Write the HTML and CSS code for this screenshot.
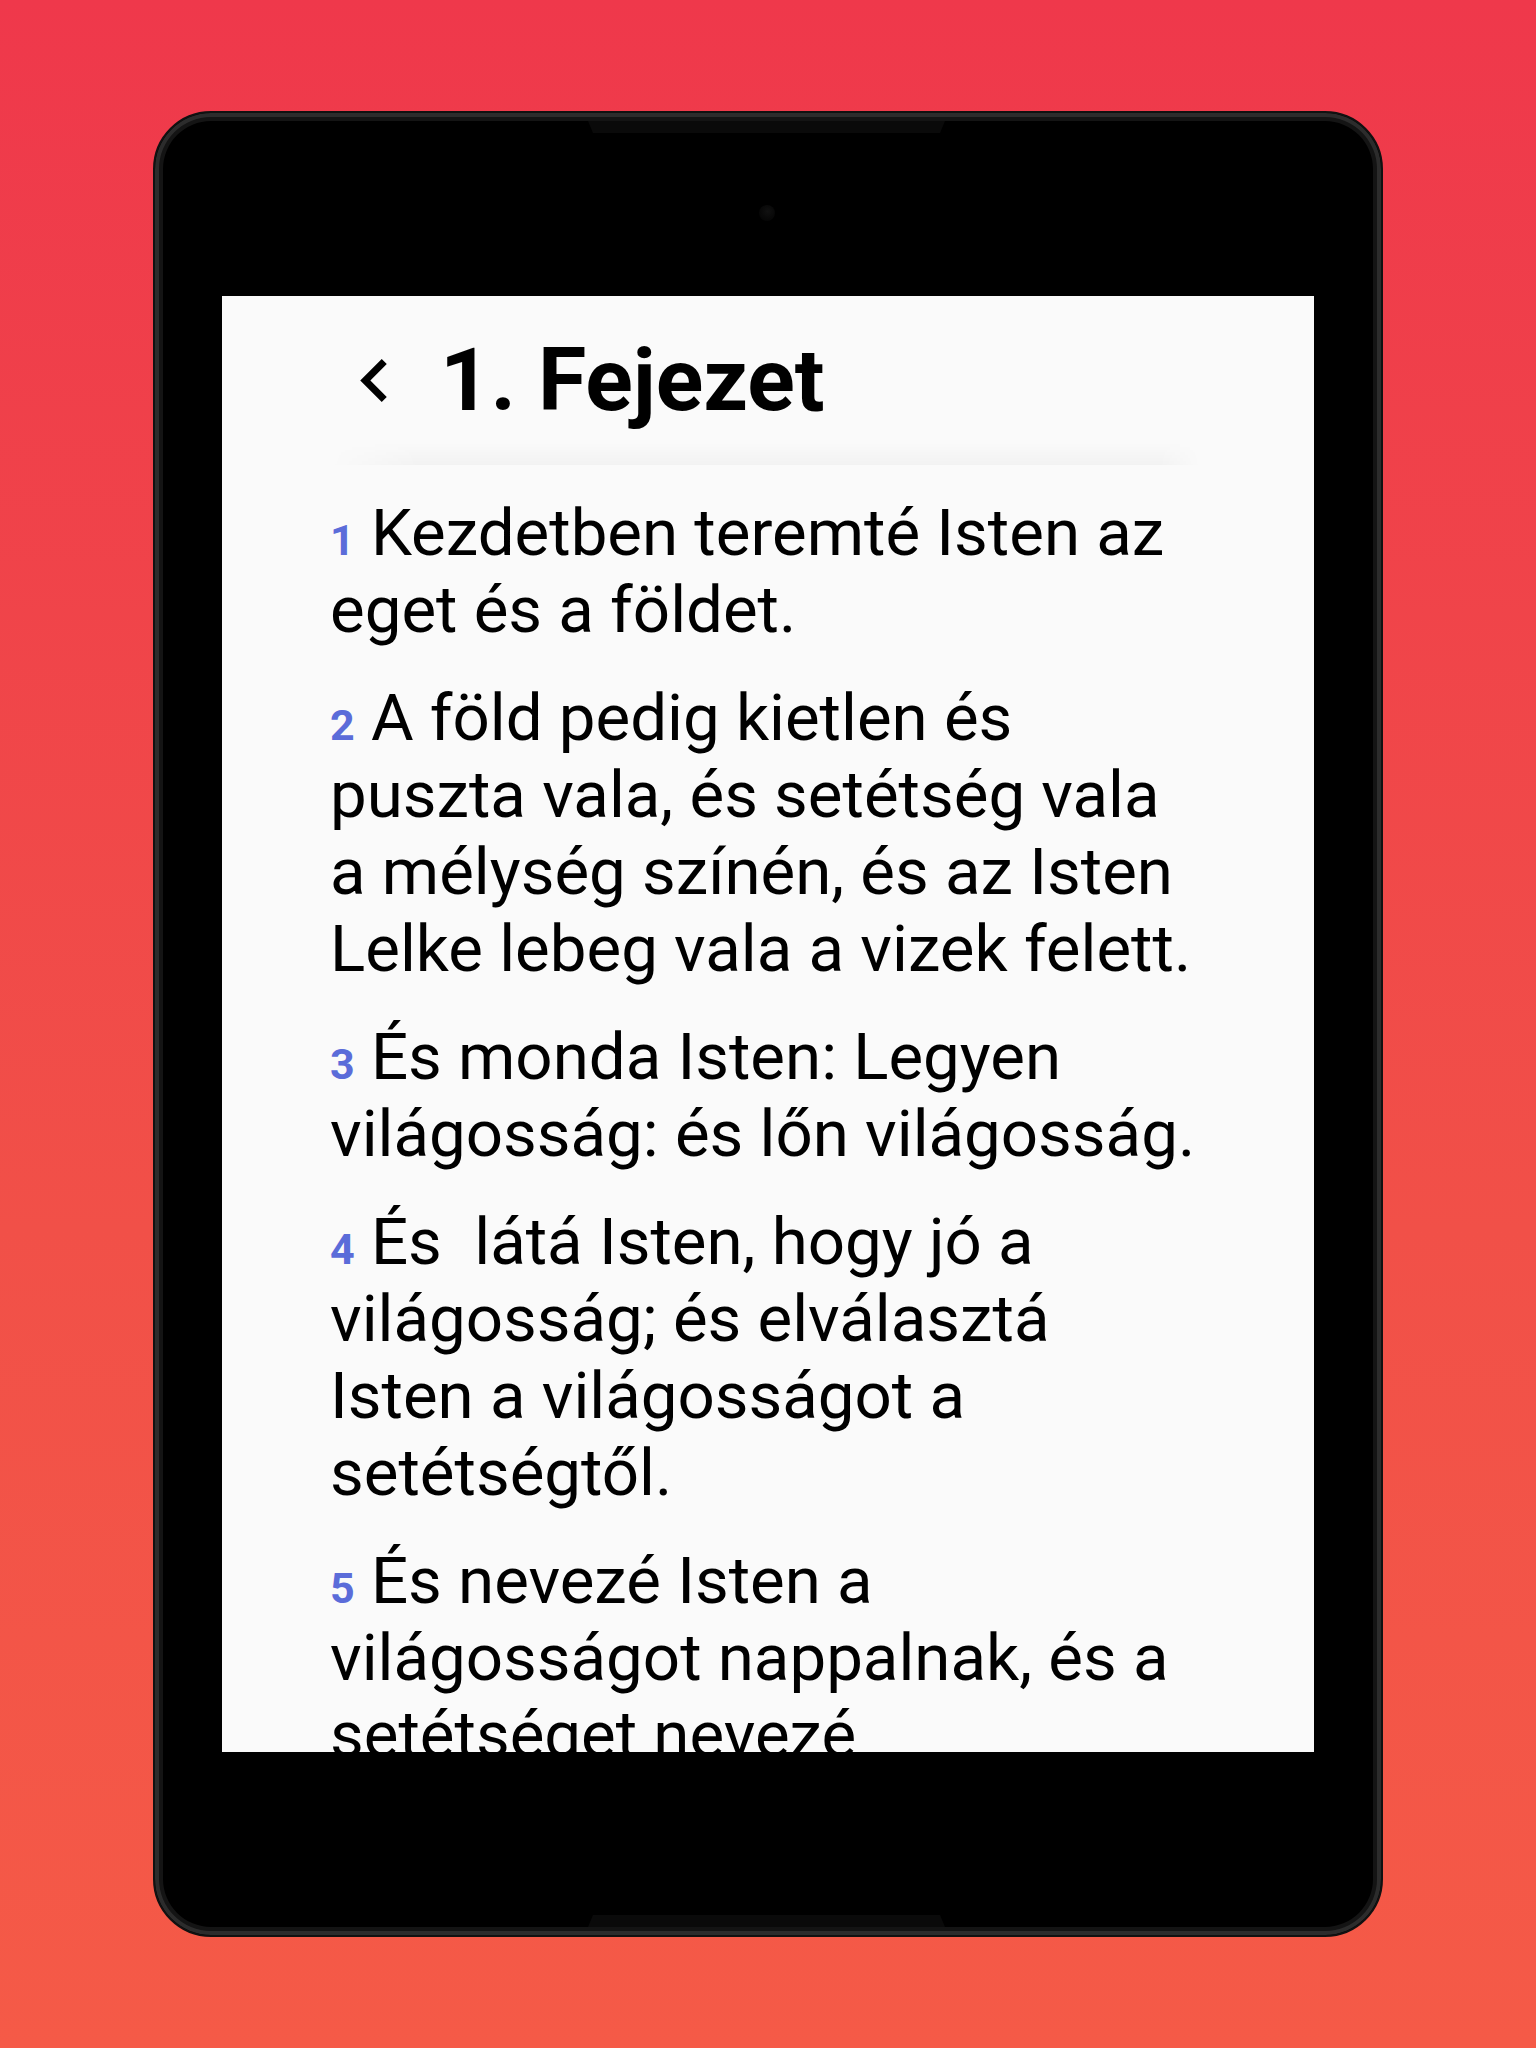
FILE: index.html
```html
<!DOCTYPE html>
<html lang="hu">
<head>
<meta charset="utf-8">
<title>1. Fejezet</title>
<link rel="stylesheet" href="styles.css">
</head>
<body>
<div class="stage">
  <div class="tablet">
    <div class="speaker speaker-top"></div>
    <div class="camera"></div>
    <div class="speaker speaker-bottom"></div>
    <div class="screen">
      <header class="appbar">
        <svg class="back" viewBox="0 0 7.41 12" aria-hidden="true"><path d="M7.41 1.41L6 0 0 6l6 6 1.41-1.41L2.83 6z"/></svg>
        <h1 class="title">1. Fejezet</h1>
      </header>
      <div class="appbar-shadow"></div>
      <div class="verses">
        <p class="verse"><span class="num">1</span> Kezdetben teremté Isten az eget és a földet.</p>
        <p class="verse"><span class="num">2</span> A föld pedig kietlen és puszta vala, és setétség vala a mélység színén, és az Isten Lelke lebeg vala a vizek felett.</p>
        <p class="verse"><span class="num">3</span> És monda Isten: Legyen világosság: és lőn világosság.</p>
        <p class="verse"><span class="num">4</span> És&nbsp; látá Isten, hogy jó a világosság; és elválasztá Isten a világosságot a setétségtől.</p>
        <p class="verse"><span class="num">5</span> És nevezé Isten a világosságot nappalnak, és a setétséget nevezé éjszakának. És lőn este és lőn reggel, első nap.</p>
      </div>
    </div>
  </div>
</div>
</body>
</html>
```
FILE: styles.css
```css
html, body {
  margin: 0;
  padding: 0;
}
body {
  width: 1536px;
  height: 2048px;
  overflow: hidden;
  background: linear-gradient(to bottom, #ef384b 0%, #f15048 60%, #f55a47 100%);
  font-family: Roboto, "Noto Sans", sans-serif;
}
.stage {
  padding: 111px 0 0 153px;
}
.tablet {
  position: relative;
  box-sizing: border-box;
  width: 1230px;
  height: 1826px;
  border-radius: 58px;
  background: #000;
  border: 2px solid #111;
  box-shadow: inset 0 0 0 4px #2c2c2c, inset 0 0 0 8px #141414;
  padding: 183px 67px;
}
.speaker {
  position: absolute;
  left: 433px;
  width: 357px;
  height: 12px;
  background: #0a0a0a;
}
.speaker-top {
  top: 8px;
  clip-path: polygon(0 0, 100% 0, 98.6% 100%, 1.4% 100%);
}
.speaker-bottom {
  bottom: 8px;
  clip-path: polygon(1.4% 0, 98.6% 0, 100% 100%, 0 100%);
}
.camera {
  position: absolute;
  left: 604px;
  top: 92px;
  width: 16px;
  height: 16px;
  border-radius: 50%;
  background: radial-gradient(circle at 55% 40%, #111 0%, #080808 55%, #030303 100%);
}
.screen {
  height: 1456px;
  background: #fafafa;
  overflow: hidden;
  padding: 0 114px 0 108px;
}
.appbar {
  display: flex;
  align-items: center;
  gap: 53px;
  padding: 34px 0 35px 30px;
}
.back {
  width: 27px;
  height: 43px;
  fill: #000;
  flex: none;
}
.title {
  margin: 0;
  font-size: 88px;
  line-height: 100px;
  font-weight: 700;
  color: #000;
  letter-spacing: 0;
}
.appbar-shadow {
  height: 22px;
  margin-top: -22px;
  background: linear-gradient(to bottom, rgba(0,0,0,0) 0%, rgba(0,0,0,0.018) 60%, rgba(0,0,0,0.03) 100%);
  -webkit-mask-image: linear-gradient(to right, transparent 0, #000 90px, #000 calc(100% - 40px), transparent 100%);
  mask-image: linear-gradient(to right, transparent 0, #000 90px, #000 calc(100% - 40px), transparent 100%);
}
.verses {
  padding-top: 29px;
}
.verse {
  margin: 0 0 31px 0;
  font-size: 65.4px;
  line-height: 77px;
  color: #000;
}
.num {
  font-size: 43px;
  line-height: 1;
  font-weight: 700;
  color: #5b6cd9;
}
```
